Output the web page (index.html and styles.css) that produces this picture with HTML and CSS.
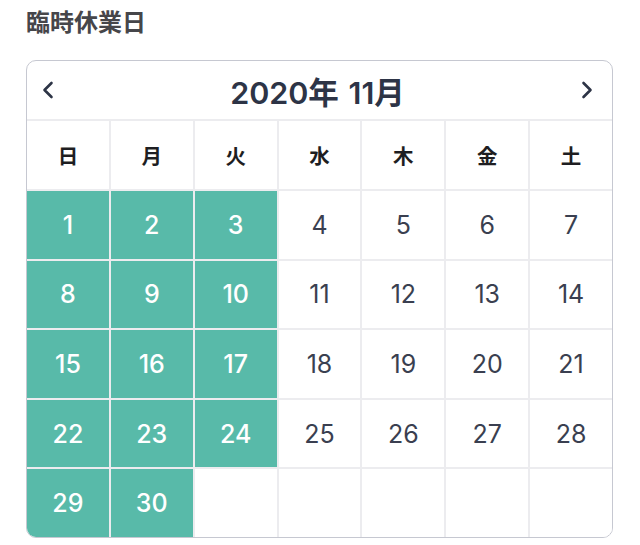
FILE: index.html
```html
<!DOCTYPE html>
<html lang="ja">
<head>
<meta charset="utf-8">
<title>臨時休業日</title>
<link rel="stylesheet" href="styles.css">
</head>
<body>
<div class="page">
  <h2 class="title">臨時休業日</h2>
  <div class="card">
    <div class="head">
      <button class="nav" aria-label="前の月">
        <svg width="14" height="18" viewBox="0 0 14 18"><path d="M10.5 2 L3.5 9 L10.5 16" fill="none" stroke="#2d3446" stroke-width="2.6" stroke-linecap="round" stroke-linejoin="round"/></svg>
      </button>
      <div class="month">2020年 11月</div>
      <button class="nav" aria-label="次の月">
        <svg width="14" height="18" viewBox="0 0 14 18"><path d="M3.5 2 L10.5 9 L3.5 16" fill="none" stroke="#2d3446" stroke-width="2.6" stroke-linecap="round" stroke-linejoin="round"/></svg>
      </button>
    </div>
    <div class="grid">
      <div class="dow">日</div><div class="dow">月</div><div class="dow">火</div><div class="dow">水</div><div class="dow">木</div><div class="dow">金</div><div class="dow">土</div>
      <div class="day on">1</div><div class="day on">2</div><div class="day on">3</div><div class="day">4</div><div class="day">5</div><div class="day">6</div><div class="day">7</div>
      <div class="day on">8</div><div class="day on">9</div><div class="day on">10</div><div class="day">11</div><div class="day">12</div><div class="day">13</div><div class="day">14</div>
      <div class="day on">15</div><div class="day on">16</div><div class="day on">17</div><div class="day">18</div><div class="day">19</div><div class="day">20</div><div class="day">21</div>
      <div class="day on">22</div><div class="day on">23</div><div class="day on">24</div><div class="day">25</div><div class="day">26</div><div class="day">27</div><div class="day">28</div>
      <div class="day on">29</div><div class="day on">30</div><div class="day"></div><div class="day"></div><div class="day"></div><div class="day"></div><div class="day"></div>
    </div>
  </div>
</div>
</body>
</html>
```

FILE: styles.css
```css
* { box-sizing: border-box; }
html, body { margin: 0; padding: 0; background: #fff; }
body {
  font-family: Inter, "Noto Sans CJK JP", sans-serif;
  color: #2d3446;
}
.page {
  padding: 6px 0 0 26px;
  width: 614px;
}
.title {
  margin: 0;
  font-size: 24px;
  font-weight: 700;
  line-height: 34px;
  color: #46464a;
}
.card {
  margin-top: 20px;
  border: 1.5px solid #c6c8d1;
  border-radius: 10px;
  overflow: hidden;
  width: 587px;
}
.head {
  height: 58px;
  display: flex;
  align-items: center;
  justify-content: space-between;
  padding: 0 15px 0 11px;
}
.nav {
  border: 0;
  background: none;
  padding: 0;
  width: 20px;
  height: 24px;
  display: flex;
  align-items: center;
  justify-content: center;
}
.month {
  font-size: 30.5px;
  font-weight: 600;
  word-spacing: 2px;
  color: #2d3446;
  padding-top: 2px;
}
.grid {
  display: grid;
  grid-template-columns: repeat(7, 1fr);
  grid-template-rows: 68px repeat(5, 67.6px);
  gap: 2px;
  padding-top: 2px;
  background: #ececef;
}
.dow, .day {
  background: #fff;
  display: flex;
  align-items: center;
  justify-content: center;
}
.dow {
  font-size: 20.5px;
  font-weight: 700;
  color: #1e1e22;
}
.day {
  font-size: 25px;
  font-weight: 400;
  color: #3a3f50;
}
.day.on {
  background: #58baa9;
  color: #fff;
  font-weight: 500;
}
```
